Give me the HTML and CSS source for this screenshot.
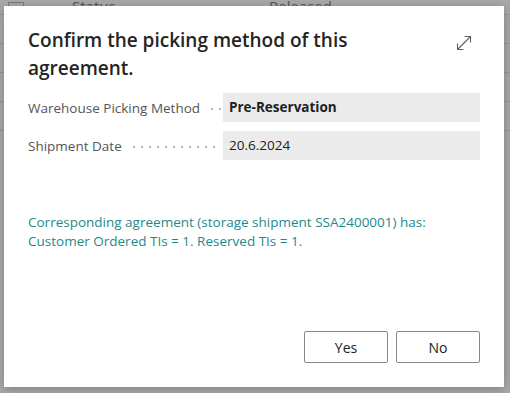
FILE: index.html
```html
<!DOCTYPE html>
<html lang="en">
<head>
    <meta charset="UTF-8">
    <meta name="viewport" content="width=device-width, initial-scale=1.0">
    <title>Confirm picking method</title>
    <link rel="stylesheet" href="styles.css">
</head>
<body>
    <!-- Dimmed page behind the dialog -->
    <div class="page">
        <div class="page-row top">
            <span class="page-icon"></span>
            <span class="page-label">Status</span>
            <span class="page-value">Released</span>
        </div>
        <div class="page-row"></div>
        <div class="page-row"></div>
        <div class="page-row"></div>
        <div class="page-row"></div>
    </div>

    <div class="dialog">
        <div class="dialog-head">
            <h1>Confirm the picking method of this agreement.</h1>
            <svg class="expand" width="16" height="16" viewBox="0 0 16 16" fill="none" stroke="#605e5c" stroke-width="1.1">
                <path d="M1.5 14.5 L14.5 1.5"/>
                <path d="M8.5 1.5 H14.5 V7.5"/>
                <path d="M1.5 8.5 V14.5 H7.5"/>
            </svg>
        </div>

        <div class="fields">
            <div class="field">
                <span class="label">Warehouse Picking Method</span>
                <span class="value bold">Pre-Reservation</span>
            </div>
            <div class="field">
                <span class="label">Shipment Date</span>
                <span class="value">20.6.2024</span>
            </div>
        </div>

        <p class="message">Corresponding agreement (storage shipment SSA2400001) has:<br>Customer Ordered TIs = 1. Reserved TIs = 1.</p>

        <div class="actions">
            <button>Yes</button>
            <button>No</button>
        </div>
    </div>
</body>
</html>
```

FILE: styles.css
```css
body {
    margin: 0;
    width: 510px;
    height: 393px;
    overflow: hidden;
    background: #a9a9a9;
    font-family: "Open Sans", "Noto Sans", sans-serif;
    position: relative;
}
.page-row {
    height: 38px;
    border-bottom: 1px solid #969696;
    box-sizing: border-box;
    margin-top: -9px;
    padding-top: 9px;
}
.page-row.top {
    display: flex;
    align-items: flex-end;
    height: 19px;
    margin-top: -4px;
    padding: 0 0 0 8px;
    font-size: 15px;
    line-height: 15px;
    color: #575757;
}
.page-icon {
    width: 14px;
    height: 10px;
    border: 1px solid #7a7a7a;
    margin-right: 48px;
}
.page-label { width: 197px; }

.dialog {
    position: absolute;
    left: 4px;
    top: 6px;
    width: 500px;
    height: 381px;
    background: #fff;
    box-shadow: 0 2px 10px rgba(0,0,0,0.25);
    box-sizing: border-box;
    padding: 20px 24px 0 24px;
    display: flex;
    flex-direction: column;
}
.dialog-head {
    display: flex;
    justify-content: space-between;
    align-items: flex-start;
}
h1 {
    margin: 0;
    width: 340px;
    font-size: 19px;
    font-weight: 600;
    line-height: 28px;
    color: #242424;
}
.expand { margin: 9px 8px 0 0; }

.fields {
    margin-top: 11px;
    display: flex;
    flex-direction: column;
    gap: 9px;
}
.field {
    display: flex;
    align-items: center;
    height: 29px;
}
.label {
    width: 195px;
    display: flex;
    align-items: center;
    gap: 8px;
    font-size: 13.5px;
    color: #555;
    white-space: nowrap;
    overflow: hidden;
}
.label::after {
    content: "";
    flex: 1;
    min-width: 14px;
    height: 2px;
    margin-top: 3px;
    margin-right: 4px;
    background-image: radial-gradient(circle, #b4b4b4 0.7px, transparent 1px);
    background-size: 8px 2px;
}
.value {
    width: 257px;
    height: 29px;
    line-height: 29px;
    background: #ebebec;
    padding-left: 6px;
    box-sizing: border-box;
    font-size: 13.5px;
    color: #212121;
}
.value.bold { font-weight: 700; }

.message {
    margin: 53px 0 0;
    font-size: 13.5px;
    line-height: 19px;
    color: #1d8a8a;
}

.actions {
    margin-top: auto;
    margin-bottom: 24px;
    display: flex;
    justify-content: flex-end;
    gap: 8px;
}
button {
    width: 84px;
    height: 32px;
    background: #fff;
    border: 1px solid #8a8886;
    border-radius: 2px;
    font-family: inherit;
    font-size: 14px;
    color: #212121;
}
```
